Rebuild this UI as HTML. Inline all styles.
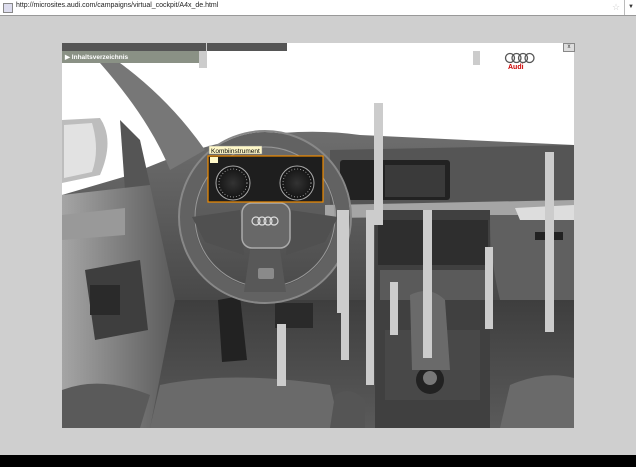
<!DOCTYPE html>
<html><head><style>
html,body{margin:0;padding:0;width:636px;height:467px;overflow:hidden;background:#cfcfcf;font-family:"Liberation Sans",sans-serif}
.abs{position:absolute}
</style></head><body>
<div class="abs" style="left:0;top:0;width:636px;height:15px;background:#fff;border-bottom:1px solid #999"></div>
<div class="abs" style="left:3px;top:3px;width:8px;height:8px;border:1px solid #888;background:#dde"></div>
<div class="abs" style="left:16px;top:2px;font-size:7px;color:#222">http://microsites.audi.com/campaigns/virtual_cockpit/A4x_de.html</div>
<div class="abs" style="left:612px;top:2px;font-size:9px;color:#ccc">☆</div>
<div class="abs" style="left:624px;top:0;width:12px;height:15px;border-left:1px solid #bbb;font-size:6px;color:#333;text-align:center;line-height:15px">▼</div>
<div class="abs" style="left:0;top:455px;width:636px;height:12px;background:#000"></div>

<svg class="abs" style="left:62px;top:43px" width="512" height="385" viewBox="62 43 512 385">
<defs>
<linearGradient id="dash" x1="0" y1="0" x2="0" y2="1"><stop offset="0" stop-color="#6e6e6e"/><stop offset="1" stop-color="#484848"/></linearGradient>
<linearGradient id="floor" x1="0" y1="0" x2="0" y2="1"><stop offset="0" stop-color="#333"/><stop offset="1" stop-color="#5a5a5a"/></linearGradient>
<linearGradient id="door" x1="0" y1="0" x2="1" y2="0"><stop offset="0" stop-color="#a5a5a5"/><stop offset="1" stop-color="#5a5a5a"/></linearGradient>
<radialGradient id="g" cx=".5" cy=".5" r=".5"><stop offset="0" stop-color="#333"/><stop offset="1" stop-color="#111"/></radialGradient>
</defs>
<rect x="62" y="43" width="512" height="385" fill="#fff"/>
<rect x="62" y="250" width="512" height="178" fill="url(#floor)"/>
<path d="M130 175 Q250 120 360 135 L574 145 L574 300 L62 300 L62 195 Z" fill="url(#dash)"/>
<path d="M330 150 L574 145 L574 205 L330 210 Z" fill="#555"/>
<rect x="340" y="160" width="110" height="40" rx="3" fill="#222"/>
<rect x="385" y="165" width="60" height="32" fill="#3a3a3a"/>
<path d="M325 205 L574 200 L574 215 L325 218 Z" fill="#a5a5a5"/>
<rect x="375" y="210" width="115" height="218" fill="#404040"/>
<rect x="378" y="220" width="110" height="45" fill="#2e2e2e"/>
<rect x="380" y="270" width="105" height="30" fill="#5a5a5a"/>
<rect x="385" y="330" width="95" height="70" fill="#484848"/>
<circle cx="430" cy="380" r="14" fill="#222"/><circle cx="430" cy="378" r="7" fill="#777"/>
<path d="M410 295 Q430 285 445 300 L450 370 L412 370 Z" fill="#6a6a6a"/>
<path d="M490 215 L574 215 L574 300 L500 300 Q490 260 490 215 Z" fill="#606060"/>
<path d="M515 208 L574 205 L574 220 L520 220 Z" fill="#ddd"/>
<rect x="535" y="232" width="28" height="8" fill="#222"/>
<!-- pillar -->
<path d="M100 63 L120 63 Q170 100 205 150 L170 170 Q150 120 100 63 Z" fill="#777"/>
<path d="M120 120 L140 140 L150 185 L125 190 Z" fill="#555"/>
<!-- mirror -->
<path d="M62 120 L100 118 Q115 140 100 175 L62 183 Z" fill="#bdbdbd"/>
<path d="M64 125 L92 123 Q100 150 92 172 L64 178 Z" fill="#e2e2e2"/>
<path d="M62 195 L150 185 L175 300 L150 428 L62 428 Z" fill="url(#door)"/>
<path d="M62 215 L125 208 L125 235 L62 240 Z" fill="#999"/>
<path d="M85 270 L140 260 L148 330 L95 340 Z" fill="#3e3e3e"/>
<rect x="90" y="285" width="30" height="30" fill="#2a2a2a"/>
<path d="M218 300 L240 296 L247 360 L222 362 Z" fill="#222"/>
<rect x="275" y="303" width="38" height="25" fill="#2a2a2a"/>
<path d="M150 428 L160 385 Q230 370 330 385 L340 428 Z" fill="#6a6a6a"/>
<path d="M62 428 L62 390 Q100 375 150 395 L140 428 Z" fill="#5a5a5a"/>
<path d="M500 428 L510 385 Q545 370 574 378 L574 428 Z" fill="#6a6a6a"/>
<path d="M330 428 L335 395 Q350 385 365 400 L365 428 Z" fill="#555"/>
<!-- steering wheel -->
<circle cx="265" cy="217" r="78" fill="none" stroke="#626262" stroke-width="14"/>
<circle cx="265" cy="217" r="86" fill="none" stroke="#888" stroke-width="2"/>
<circle cx="265" cy="217" r="70" fill="none" stroke="#999" stroke-width="1"/>
<path d="M192 217 L240 210 L244 255 L205 242 Z" fill="#505050"/>
<path d="M338 217 L290 210 L286 255 L325 242 Z" fill="#505050"/>
<path d="M250 250 L280 250 L286 292 L244 292 Z" fill="#585858"/>
<rect x="242" y="203" width="48" height="45" rx="10" fill="#686868" stroke="#aaa" stroke-width="1.5"/>
<rect x="258" y="268" width="16" height="11" rx="2" fill="#8a8a8a"/>
<g fill="none" stroke="#ddd" stroke-width="1.2"><circle cx="256" cy="221" r="4"/><circle cx="262" cy="221" r="4"/><circle cx="268" cy="221" r="4"/><circle cx="274" cy="221" r="4"/></g>
<rect x="208" y="156" width="115" height="46" fill="#1e1e1e"/>
<circle cx="233" cy="183" r="17" fill="url(#g)" stroke="#aaa" stroke-width="1"/>
<circle cx="297" cy="183" r="17" fill="url(#g)" stroke="#aaa" stroke-width="1"/>
<circle cx="233" cy="183" r="14" fill="none" stroke="#999" stroke-width="1" stroke-dasharray="1 2"/>
<circle cx="297" cy="183" r="14" fill="none" stroke="#999" stroke-width="1" stroke-dasharray="1 2"/>
<rect x="208" y="156" width="115" height="46" fill="none" stroke="#f08c00" stroke-width="1.2"/>
<rect x="209" y="146" width="53" height="8" fill="#fff8c8" stroke="#888" stroke-width=".5"/>
<text x="211" y="153" font-size="6.5" font-family="Liberation Sans" fill="#000">Kombiinstrument</text>
<rect x="210" y="157" width="8" height="6" fill="#fff8c8"/>
<g fill="#cccccc">
<rect x="374" y="103" width="9" height="122"/>
<rect x="337" y="210" width="12" height="103"/>
<rect x="341" y="310" width="8" height="50"/>
<rect x="366" y="210" width="8" height="175"/>
<rect x="423" y="210" width="9" height="148"/>
<rect x="485" y="247" width="8" height="82"/>
<rect x="545" y="152" width="9" height="180"/>
<rect x="277" y="324" width="9" height="62"/>
<rect x="390" y="282" width="8" height="53"/>
</g>
</svg>

<div class="abs" style="left:62px;top:43px;width:225px;height:8px;background:#555"></div>
<div class="abs" style="left:206px;top:43px;width:1px;height:8px;background:#ccc"></div>
<div class="abs" style="left:62px;top:51px;width:145px;height:12px;background:#8a9185"></div>
<div class="abs" style="left:65px;top:53px;font-size:6.5px;color:#fff;font-weight:bold">▶ Inhaltsverzeichnis</div>
<div class="abs" style="left:199px;top:51px;width:8px;height:17px;background:#ccc"></div>
<div class="abs" style="left:473px;top:51px;width:7px;height:14px;background:#ccc"></div>
<div class="abs" style="left:563px;top:43px;width:10px;height:7px;background:#ddd;border:1px solid #888;font-size:6px;line-height:7px;text-align:center;color:#333">x</div>
<svg class="abs" style="left:503px;top:52px" width="34" height="12"><g fill="none" stroke="#555" stroke-width="1.3"><circle cx="7" cy="6" r="4.5"/><circle cx="13.5" cy="6" r="4.5"/><circle cx="20" cy="6" r="4.5"/><circle cx="26.5" cy="6" r="4.5"/></g></svg>
<div class="abs" style="left:508px;top:64px;font-size:7px;font-weight:bold;color:#c00">Audi</div>
</body></html>
